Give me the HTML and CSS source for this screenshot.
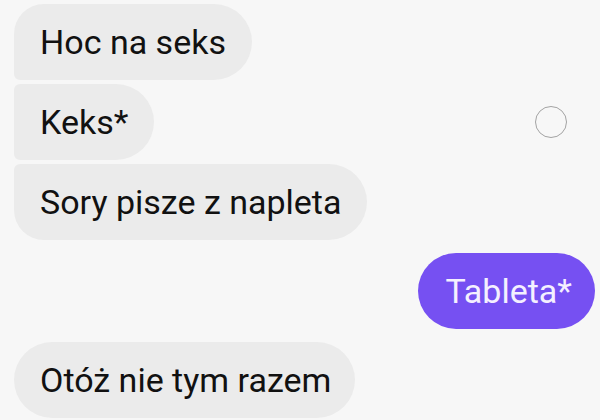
FILE: index.html
```html
<!DOCTYPE html>
<html lang="pl">
<head>
    <meta charset="UTF-8">
    <meta name="viewport" content="width=device-width, initial-scale=1.0">
    <title>Wiadomości</title>
    <link rel="stylesheet" href="styles.css">
</head>
<body>
    <div class="chat">
        <div class="group">
            <div class="bubble in first">Hoc na seks</div>
            <div class="bubble in">Keks*</div>
            <div class="bubble in last">Sory pisze z napleta</div>
        </div>

        <div class="bubble out">Tableta*</div>

        <div class="group">
            <div class="bubble in single">Otóż nie tym razem</div>
        </div>

        <span class="select-dot"></span>
    </div>
</body>
</html>
```

FILE: styles.css
```css
body {
    font-family: Roboto, "Noto Sans", Arial, sans-serif;
    background-color: #f7f7f7;
    margin: 0;
    padding: 0;
}
.chat {
    position: relative;
    width: 600px;
    height: 420px;
    padding: 4px 5px 0 14px;
    box-sizing: border-box;
    display: flex;
    flex-direction: column;
    overflow: hidden;
}
.group {
    display: flex;
    flex-direction: column;
    align-items: flex-start;
    gap: 4px;
}
.bubble {
    height: 76px;
    padding: 0 26px;
    box-sizing: border-box;
    display: flex;
    align-items: center;
    font-size: 34px;
    color: #111;
    white-space: nowrap;
}
.in {
    background-color: #ebebeb;
    border-radius: 6px 38px 38px 6px;
}
.in.first {
    border-top-left-radius: 30px;
}
.in.last {
    border-bottom-left-radius: 30px;
}
.in.single {
    border-radius: 38px;
    margin-top: 13px;
    padding-right: 24px;
}
.out {
    align-self: flex-end;
    margin-top: 13px;
    background-color: #7650f2;
    color: #f4f0ff;
    border-radius: 38px;
    padding: 0 23px 0 27px;
}
.select-dot {
    position: absolute;
    left: 535px;
    top: 106px;
    width: 32px;
    height: 32px;
    box-sizing: border-box;
    border: 1.5px solid #a3a3a3;
    border-radius: 50%;
}
```
